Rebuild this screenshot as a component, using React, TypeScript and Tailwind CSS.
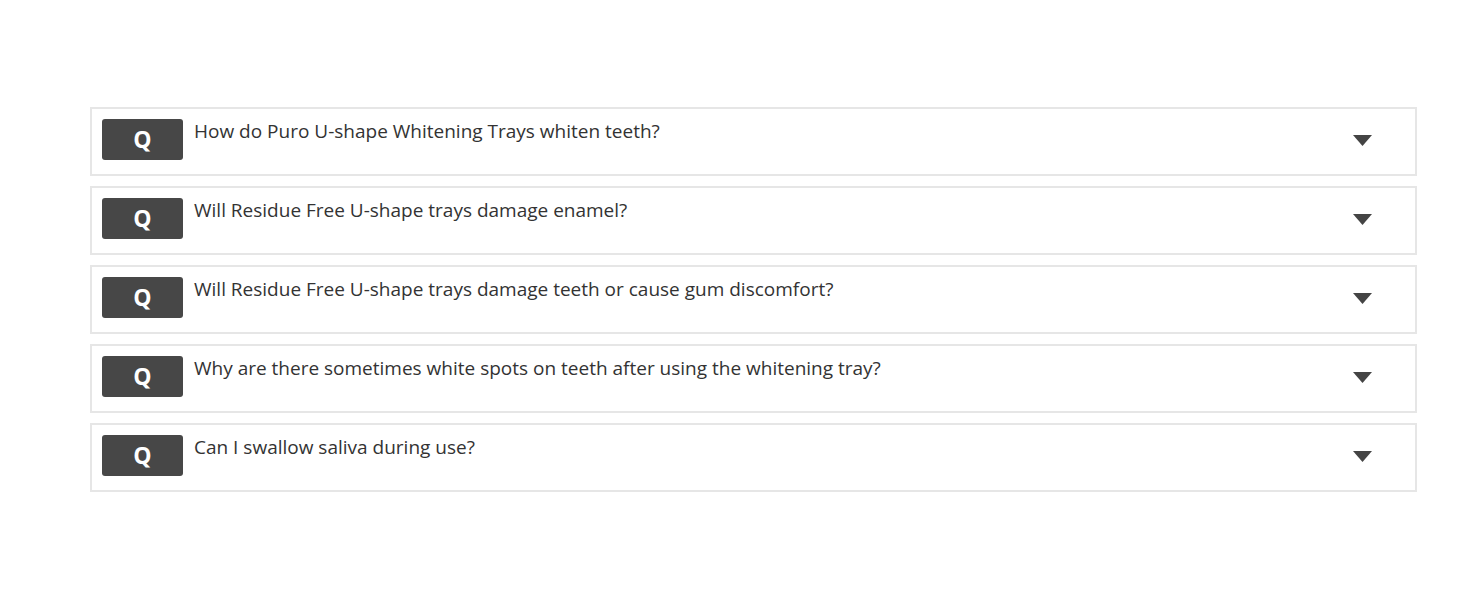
const QUESTIONS = [
  "How do Puro U-shape Whitening Trays whiten teeth?",
  "Will Residue Free U-shape trays damage enamel?",
  "Will Residue Free U-shape trays damage teeth or cause gum discomfort?",
  "Why are there sometimes white spots on teeth after using the whitening tray?",
  "Can I swallow saliva during use?",
];

function Caret() {
  return (
    <svg width="19" height="11" viewBox="0 0 19 11" className="-mt-[3px] shrink-0">
      <path d="M0 0 L19 0 L9.5 11 Z" fill="#444444" />
    </svg>
  );
}

export default function App() {
  return (
    <div className="min-h-[600px] w-full bg-white pt-[107px] pl-[90px] pr-[48px] font-['Open_Sans',sans-serif]">
      <div className="flex flex-col gap-[10px]">
        {QUESTIONS.map((q) => (
          <div
            key={q}
            className="flex h-[69px] items-center border-2 border-[#e6e6e6] pl-[10px] pr-[43px]"
          >
            <div className="mt-[10px] flex h-[41px] w-[81px] shrink-0 items-center justify-center self-start rounded-[3px] bg-[#474747] text-[23px] font-bold text-white">
              Q
            </div>
            <p className="ml-[11px] flex-1 self-start pt-[9px] text-[19px] leading-[26px] text-[#333333]">
              {q}
            </p>
            <Caret />
          </div>
        ))}
      </div>
    </div>
  );
}
